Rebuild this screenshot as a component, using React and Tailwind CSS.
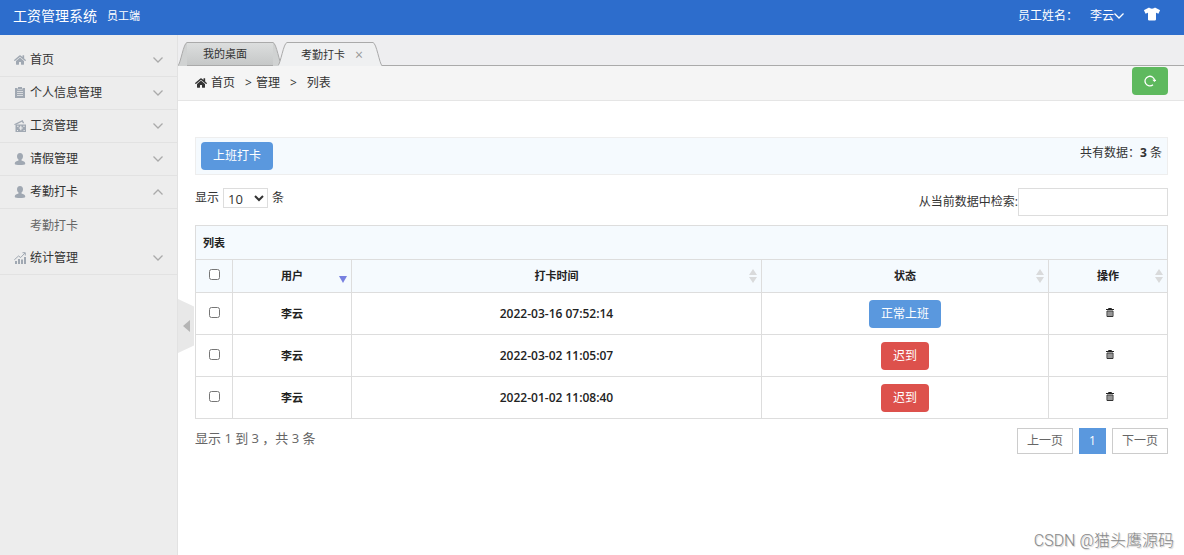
import { FaHome, FaTshirt } from 'react-icons/fa'

const MENU = [
  { label: '首页', icon: 'home' },
  { label: '个人信息管理', icon: 'clipboard' },
  { label: '工资管理', icon: 'money' },
  { label: '请假管理', icon: 'user' },
  { label: '考勤打卡', icon: 'user', open: true, children: ['考勤打卡'] },
  { label: '统计管理', icon: 'chart' },
]

const RECORDS = [
  { name: '李云', time: '2022-03-16 07:52:14', status: '正常上班' },
  { name: '李云', time: '2022-03-02 11:05:07', status: '迟到' },
  { name: '李云', time: '2022-01-02 11:08:40', status: '迟到' },
]

const STATUS_COLORS = {
  正常上班: 'bg-[#5a98de] hover:bg-[#6aa2e0]',
  迟到: 'bg-[#dd514c] hover:bg-[#c62b26]',
}

function MenuIcon({ name }) {
  if (name === 'home') return <FaHome className="size-3 shrink-0" />
  return (
    <svg viewBox="0 0 12 12" className="size-3 shrink-0" fill="currentColor" aria-hidden="true">
      {name === 'clipboard' && (
        <>
          <path d="M4 0h4v2H4z" />
          <path fillRule="evenodd" d="M1 1h2.5v1.5h5V1H11v10H1zM3 4v.8h6V4zm0 2v.8h6V6zm0 2v.8h6V8z" />
        </>
      )}
      {name === 'money' && (
        <>
          <path d="M0 4.2 8.6 0l1.7 3.3H8.8L8 1.7 2.4 4.4v.4H.3z" />
          <path fillRule="evenodd" d="M1.5 4.5H12V12H1.5zM3 5.8v1h1.6v-1zm3.2-.1v1.2H4.8v.6h1.4v1H4.8v.6h1.4v1.2h1.2V9.100h1.4v-.6H7.4v-1h1.4v-.6H7.4V5.7zm3 .1v1h1.5v-1zM3 9.9v1h1v-1zm6.6 0v1h1.1v-1z" />
        </>
      )}
      {name === 'user' && (
        <path d="M6 0c2 0 3 1.300 3 3.200 0 1.500-.6 2.700-1.500 3.400v1c1.800.5 3.700 1.200 3.700 2.700V11c0 .6-2.500 1-5.200 1S.8 11.600.8 11v-.7c0-1.500 1.900-2.200 3.700-2.700v-1C3.600 5.900 3 4.700 3 3.200 3 1.300 4 0 6 0z" />
      )}
      {name === 'chart' && (
        <>
          <path d="M1 9h2v3H1zM4 7h2v5H4zM7 7.500h2V12H7zM10 5h2v7h-2z" />
          <path d="M.3 7.800 4.500 4l2.200 1.500L11 1M8.500.7h2.800v2.800" fill="none" stroke="currentColor" />
        </>
      )}
    </svg>
  )
}

function Chevron({ up, className }) {
  return (
    <svg viewBox="0 0 10 6" className={className} fill="none" stroke="currentColor" strokeWidth="1.3" aria-hidden="true">
      <path d={up ? 'M.5 5.500 5 1l4.500 4.500' : 'M.5.500 5 5 9.500.500'} />
    </svg>
  )
}

function Trash() {
  return (
    <svg viewBox="0 0 8 9" className="h-[9px] w-2" aria-hidden="true">
      <path d="M2.500 1V.500h3V1M0 1.500h8" fill="none" stroke="#222" />
      <path d="M1 3h6v5.500H1z" fill="#bbb" stroke="#333" />
      <path d="M3 3v5M5 3v5" stroke="#555" strokeWidth=".7" />
    </svg>
  )
}

function Sort({ active }) {
  return (
    <svg viewBox="0 0 8 14" className="absolute top-1/2 right-1 h-[14px] w-2 -translate-y-1/2" aria-hidden="true">
      {active ? (
        <path d="M0 7h8L4 14z" fill="#7780e0" />
      ) : (
        <path d="M0 6h8L4 0zM0 8h8l-4 6z" fill="#d9dadb" />
      )}
    </svg>
  )
}

function Tab({ label, active, closable }) {
  const fill = active ? '#eff0f1' : '#d0d2d2'
  return (
    <li className={`flex h-6 ${active ? 'z-10 -ml-1' : ''}`}>
      <svg viewBox="0 0 9 24" className="h-6 w-[9px]" aria-hidden="true">
        <path d="M0 24C2 22 6 1 9 .500V24z" fill={fill} />
        <path d="M0 23.500C2.500 22 5.500 1 9 .500" fill="none" stroke="#aaa" />
      </svg>
      <button
        type="button"
        className={`flex w-[86px] items-center justify-between border-t border-[#aaa] pr-2.5 text-[11px] ${
          active ? 'bg-[#eff0f1] pl-3.5' : 'border-b bg-linear-to-b from-[#dcdede] to-[#c6c8c8] pl-4'
        }`}
      >
        {label}
        {closable && <span className="text-[14px] leading-4 text-[#999]">×</span>}
      </button>
      <svg viewBox="0 0 9 24" className="h-6 w-[9px]" aria-hidden="true">
        <path d="M9 24C7 22 3 1 0 .500V24z" fill={fill} />
        <path d="M9 23.500C6.500 22 3.500 1 0 .500" fill="none" stroke="#aaa" />
      </svg>
    </li>
  )
}

function Sidebar() {
  return (
    <nav className="w-[178px] shrink-0 border-r border-[#e2e2e2] bg-[#ededed] pt-[9px]">
      {MENU.map((item) => (
        <div key={item.label}>
          <button
            type="button"
            className="flex h-[33px] w-full items-center gap-1 border-b border-[#e2e2e2] pr-3.5 pl-3.5 text-[#333]"
          >
            <span className="text-[#a0a8b2]">
              <MenuIcon name={item.icon} />
            </span>
            <span className="flex-1 text-left">{item.label}</span>
            <Chevron up={item.open} className="h-1.5 w-2.5 text-[#aaa]" />
          </button>
          {item.children && (
            <ul>
              {item.children.map((child) => (
                <li key={child}>
                  <a href="#" className="flex h-[33px] items-center pl-[30px] text-[#666]">{child}</a>
                </li>
              ))}
            </ul>
          )}
        </div>
      ))}
    </nav>
  )
}

function RecordTable() {
  const th = 'relative border border-[#ddd] font-bold'
  return (
    <table className="w-full table-fixed border-collapse text-center text-[11px] text-[#222]">
      <colgroup>
        <col className="w-[37px]" />
        <col className="w-[119px]" />
        <col />
        <col className="w-[287px]" />
        <col className="w-[119px]" />
      </colgroup>
      <thead className="bg-[#f5fafe]">
        <tr className="h-[34px]">
          <th colSpan={5} className={`${th} px-[7px] text-left`}>列表</th>
        </tr>
        <tr className="h-[33px]">
          <th className={th}>
            <input type="checkbox" aria-label="全选" className="mb-1 size-[11px] align-middle" />
          </th>
          <th className={th}>用户<Sort active /></th>
          <th className={th}>打卡时间<Sort /></th>
          <th className={th}>状态<Sort /></th>
          <th className={th}>操作<Sort /></th>
        </tr>
      </thead>
      <tbody>
        {RECORDS.map((r) => (
          <tr key={r.time} className="h-[42px] font-bold">
            <td className="border border-[#ddd]">
              <input type="checkbox" aria-label={r.time} className="mb-1 size-[11px] align-middle" />
            </td>
            <td className="border border-[#ddd]">{r.name}</td>
            <td className="border border-[#ddd] text-[12px] font-semibold">{r.time}</td>
            <td className="border border-[#ddd]">
              <button
                type="button"
                className={`h-7 rounded px-3 text-[12px] font-normal text-white ${STATUS_COLORS[r.status]}`}
              >
                {r.status}
              </button>
            </td>
            <td className="border border-[#ddd]">
              <button type="button" aria-label="删除" className="mb-1 ml-1 align-middle"><Trash /></button>
            </td>
          </tr>
        ))}
      </tbody>
    </table>
  )
}

export default function App() {
  return (
    <div className="relative flex min-h-screen flex-col bg-white font-['Open_Sans','Noto_Sans_CJK_SC',sans-serif] text-[12px] leading-4 text-[#333]">
      {/* 顶栏 */}
      <header className="flex h-[35px] items-center bg-[#2d6dcc] pb-1 pl-[13px] pr-6 text-white">
        <h1 className="text-[14px]">工资管理系统</h1>
        <span className="ml-2.5 text-[11px]">员工端</span>
        <span className="ml-auto">员工姓名：</span>
        <button type="button" className="ml-3 flex items-center">
          李云
          <Chevron className="h-1.5 w-2.5" />
        </button>
        <button type="button" aria-label="换肤" className="mb-1 ml-5">
          <FaTshirt className="size-4" />
        </button>
      </header>

      <div className="flex flex-1">
        <Sidebar />

        <main className="relative min-w-0 flex-1">
          <div className="flex h-[31px] items-end border-b border-[#aaa] bg-[#eeeef0]">
            <ul className="-mb-px flex">
              <Tab label="我的桌面" />
              <Tab label="考勤打卡" active closable />
            </ul>
          </div>

          {/* 面包屑 */}
          <div className="flex h-[35px] items-center border-b border-[#e5e5e5] bg-[#f5f5f5] pr-4 pl-[17px]">
            <FaHome className="mr-1 size-3" />
            <a href="#">首页</a>
            <span className="mr-1 ml-2.5">&gt;</span>
            <span>管理</span>
            <span className="mx-2.5">&gt;</span>
            <span>列表</span>
            <button
              type="button"
              aria-label="刷新"
              className="mb-1 ml-auto flex h-7 w-9 items-center justify-center rounded bg-[#5eb95e] text-white"
            >
              <svg viewBox="0 0 12 12" className="size-3" fill="none" stroke="currentColor" strokeWidth="1.3">
                <path d="M9 9.700A4.800 4.800 0 1 1 10.600 5.500" />
                <path d="M8.300 4.800h4L10.500 7z" fill="currentColor" stroke="none" />
              </svg>
            </button>
          </div>

          <div className="pt-9 pr-4 pl-[17px]">
            <div className="flex h-[38px] items-center justify-between border border-[#eee] bg-[#f5fafe] px-[5px]">
              <button type="button" className="h-7 rounded bg-[#5a98de] px-3 text-white">上班打卡</button>
              <span className="pb-1.5">共有数据：<strong>3</strong> 条</span>
            </div>

            <div className="mt-[13px] mb-[9px] flex items-start justify-between">
              <label className="flex items-center gap-1">
                显示
                <select className="h-5 w-[45px] border border-[#ddd] bg-white text-[13px]">
                  <option>10</option>
                  <option>25</option>
                  <option>50</option>
                </select>
                条
              </label>
              <label className="flex items-center">
                从当前数据中检索:
                <input type="text" className="h-7 w-[150px] border border-[#ddd] bg-white px-1" />
              </label>
            </div>

            <RecordTable />

            <div className="mt-[9px] flex items-start justify-between text-[#666]">
              <p className="pt-0.5 text-[13px]">显示 1 到 3 ，共 3 条</p>
              <div className="flex gap-1.5">
                <button type="button" className="h-[26px] border border-[#ccc] px-[9px]">上一页</button>
                <button type="button" className="h-[26px] border border-[#5a98de] bg-[#5a98de] px-[9px] text-white">1</button>
                <button type="button" className="h-[26px] border border-[#ccc] px-[9px]">下一页</button>
              </div>
            </div>
          </div>

          {/* 收起侧栏 */}
          <button
            type="button"
            aria-label="收起菜单"
            className="absolute top-[264px] left-0 flex h-[54px] w-4 items-center justify-center bg-[#e8e8e8] [clip-path:polygon(0_0,100%_14%,100%_86%,0_100%)]"
          >
            <svg viewBox="0 0 7 12" className="h-3 w-[7px]">
              <path d="M7 0v12L0 6z" fill="#b5b5b5" />
            </svg>
          </button>
        </main>
      </div>

      <span className="absolute right-2.5 bottom-1 font-['Roboto','Noto_Sans_CJK_SC',sans-serif] text-[16px] leading-5 font-light text-[#888] [text-shadow:1px_1px_1px_#ccc]">
        CSDN @猫头鹰源码
      </span>
    </div>
  )
}
